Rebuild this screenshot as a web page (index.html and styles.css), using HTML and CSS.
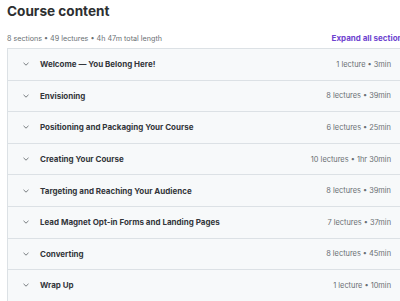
FILE: index.html
```html
<!DOCTYPE html>
<html lang="en">
<head>
    <meta charset="UTF-8">
    <meta name="viewport" content="width=device-width, initial-scale=1.0">
    <title>Course content</title>
    <link rel="stylesheet" href="styles.css">
</head>
<body>
    <div class="curriculum">
        <h2>Course content</h2>

        <div class="summary-row">
            <span class="summary">8 sections • 49 lectures • 4h 47m total length</span>
            <button class="expand">Expand all sections</button>
        </div>

        <div class="sections">
            <div class="section">
                <span class="chevron"><svg viewBox="0 0 10 10"><path d="M2.5 3.8 L5 6.2 L7.5 3.8"/></svg></span>
                <span class="title">Welcome — You Belong Here!</span>
                <span class="meta">1 lecture • 3min</span>
            </div>
            <div class="section">
                <span class="chevron"><svg viewBox="0 0 10 10"><path d="M2.5 3.8 L5 6.2 L7.5 3.8"/></svg></span>
                <span class="title">Envisioning</span>
                <span class="meta">8 lectures • 39min</span>
            </div>
            <div class="section">
                <span class="chevron"><svg viewBox="0 0 10 10"><path d="M2.5 3.8 L5 6.2 L7.5 3.8"/></svg></span>
                <span class="title">Positioning and Packaging Your Course</span>
                <span class="meta">6 lectures • 25min</span>
            </div>
            <div class="section">
                <span class="chevron"><svg viewBox="0 0 10 10"><path d="M2.5 3.8 L5 6.2 L7.5 3.8"/></svg></span>
                <span class="title">Creating Your Course</span>
                <span class="meta">10 lectures • 1hr 30min</span>
            </div>
            <div class="section">
                <span class="chevron"><svg viewBox="0 0 10 10"><path d="M2.5 3.8 L5 6.2 L7.5 3.8"/></svg></span>
                <span class="title">Targeting and Reaching Your Audience</span>
                <span class="meta">8 lectures • 39min</span>
            </div>
            <div class="section">
                <span class="chevron"><svg viewBox="0 0 10 10"><path d="M2.5 3.8 L5 6.2 L7.5 3.8"/></svg></span>
                <span class="title">Lead Magnet Opt-in Forms and Landing Pages</span>
                <span class="meta">7 lectures • 37min</span>
            </div>
            <div class="section">
                <span class="chevron"><svg viewBox="0 0 10 10"><path d="M2.5 3.8 L5 6.2 L7.5 3.8"/></svg></span>
                <span class="title">Converting</span>
                <span class="meta">8 lectures • 45min</span>
            </div>
            <div class="section">
                <span class="chevron"><svg viewBox="0 0 10 10"><path d="M2.5 3.8 L5 6.2 L7.5 3.8"/></svg></span>
                <span class="title">Wrap Up</span>
                <span class="meta">1 lecture • 10min</span>
            </div>
        </div>
    </div>
</body>
</html>
```

FILE: styles.css
```css
html, body {
    margin: 0;
    overflow: hidden;
}

body {
    font-family: Inter, "Noto Sans", sans-serif;
    color: #2d2f31;
    background: #fff;
    width: 400px;
    height: 301px;
}

.curriculum {
    width: 400px;
    margin-left: 7px;
    padding-top: 2px;
}

h2 {
    margin: 0;
    font-size: 13.6px;
    font-weight: 700;
    line-height: 18px;
}

.summary-row {
    display: flex;
    justify-content: space-between;
    align-items: center;
    margin-top: 11px;
    height: 14px;
    margin-bottom: 3px;
}

.summary {
    font-size: 7.2px;
    color: #6a6f73;
}

.expand {
    border: none;
    background: none;
    padding: 0;
    font-family: inherit;
    font-size: 8px;
    font-weight: 700;
    color: #6e43cf;
    white-space: nowrap;
    cursor: pointer;
}

.sections {
    border: 1px solid #dce1e5;
    border-right: none;
}

.section {
    display: flex;
    align-items: center;
    height: 30.6px;
    background: #f7f9fa;
    border-bottom: 1px solid #dce1e5;
    padding: 0 16px 0 13px;
}

.section:last-child {
    border-bottom: none;
}

.chevron {
    width: 10px;
    height: 10px;
    margin-right: 9px;
    display: flex;
}

.chevron svg {
    width: 10px;
    height: 10px;
    fill: none;
    stroke: #6a6f73;
    stroke-width: 0.9;
}

.title {
    flex: 1;
    font-size: 8px;
    font-weight: 700;
    color: #33363a;
}

.meta {
    font-size: 7.4px;
    color: #6a6f73;
}
```
